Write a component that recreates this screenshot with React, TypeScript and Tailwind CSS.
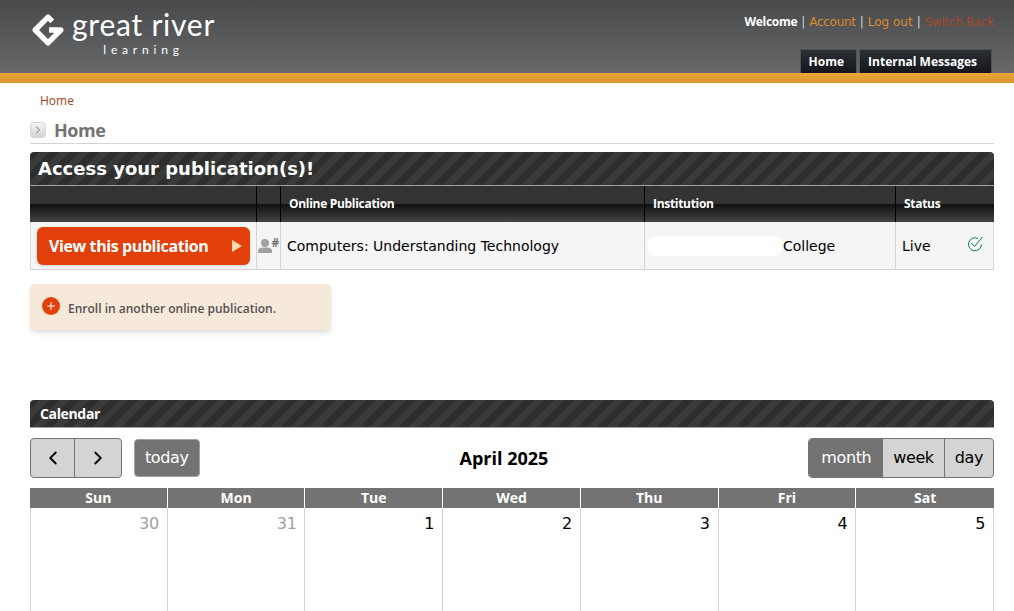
import React from 'react'
import { ChevronLeft, ChevronRight, Plus } from 'lucide-react'

const stripes = 'bg-[repeating-linear-gradient(135deg,#2e2e2e_0px,#2e2e2e_7px,#3a3a3a_7px,#3a3a3a_14px)]'
const days = ['Sun', 'Mon', 'Tue', 'Wed', 'Thu', 'Fri', 'Sat']
const cols = 'grid grid-cols-[227px_24px_364px_251px_98px]'
const bold = "font-['Open_Sans',sans-serif] font-bold"

const Logo = () => (
    <div className="flex items-start gap-2">
        <svg viewBox="0 0 30 30" className="mt-1.5 h-8 w-8" fill="none" stroke="#fff" strokeWidth="5" strokeLinejoin="round">
            <path d="M19 7 L15 3 L3 15 L15 27 L27 15 L16 15" />
        </svg>
        <div className="flex flex-col items-center gap-1 text-white">
            <span className="font-['Lato',sans-serif] text-3xl leading-8 tracking-wide">great river</span>
            <span className="font-['Lato',sans-serif] text-xs leading-3 tracking-[0.4em]">learning</span>
        </div>
    </div>
)

const Header = () => (
    <header>
        <div className="flex h-[73px] justify-between bg-gradient-to-b from-[#48494b] to-[#68696b] pl-8 pr-5">
            <div className="pt-2">
                <Logo />
            </div>
            <div className="flex flex-col items-end">
                <div className="flex gap-1 pt-3.5 text-xs text-neutral-300">
                    <span className={`${bold} tracking-tight text-white`}>Welcome</span>
                    <span>|</span>
                    <a className="tracking-tight text-[#d98a2e]">Account</a>
                    <span>|</span>
                    <a className="text-[#d98a2e]">Log out</a>
                    <span>|</span>
                    <a className="tracking-tight text-[#a8492a]">Switch Back</a>
                </div>
                <nav className={`mr-0.5 mt-auto flex gap-0.5 text-xs text-white ${bold}`}>
                    <a className="flex h-6 items-center border-x border-t border-neutral-600 bg-gradient-to-b from-[#2c2f36] to-[#14161c] pl-2 pr-3">Home</a>
                    <a className="flex h-6 items-center border-x border-t border-neutral-600 bg-gradient-to-b from-[#2c2f36] to-[#14161c] pl-2 pr-3.5">Internal Messages</a>
                </nav>
            </div>
        </div>
        <div className="h-2.5 bg-gradient-to-b from-[#eba63c] to-[#d9942f]" />
    </header>
)

const HeadCell = ({ children }: { children?: React.ReactNode }) => (
    <div className={`flex h-9 items-center border-r border-black bg-gradient-to-b from-[#333333] from-50% via-[#111111] via-50% to-[#444444] px-2 text-xs tracking-tight text-white last:border-r-0 ${bold}`}>
        {children}
    </div>
)

const Publications = () => (
    <section className="mt-2">
        <div className={`flex h-[34px] items-center rounded-t border-b border-neutral-400 px-2 text-lg font-bold text-white ${stripes}`}>
            Access your publication(s)!
        </div>
        <div className={cols}>
            <HeadCell />
            <HeadCell />
            <HeadCell>Online Publication</HeadCell>
            <HeadCell>Institution</HeadCell>
            <HeadCell>Status</HeadCell>
        </div>
        <div className={`${cols} h-12 border-b border-neutral-300 bg-neutral-100 text-sm text-black`}>
            <div className="flex items-center border-x border-neutral-300 pl-1.5">
                <a className={`flex h-9.5 w-[213px] items-center justify-between rounded-md bg-[#e2400b] pl-3 pr-2 text-base tracking-tight text-white shadow ${bold}`}>
                    View this publication
                    <span className="h-0 w-0 border-y-[6px] border-l-10 border-y-transparent border-l-orange-200" />
                </a>
            </div>
            <div className="flex items-center justify-center border-r border-neutral-300 text-neutral-400">
                <svg viewBox="0 0 14 14" className="h-3.5 w-3.5" fill="currentColor">
                    <circle cx="7" cy="4" r="4" />
                    <path d="M0 14 V12 Q0 8.5 5 8.5 H9 Q14 8.5 14 12 V14 Z" />
                </svg>
                <span className={`mb-1.5 text-xs leading-none text-neutral-500 ${bold}`}>#</span>
            </div>
            <div className="flex items-center border-r border-neutral-300 px-1.5">Computers: Understanding Technology</div>
            <div className="flex items-center border-r border-neutral-300">
                <span className="ml-0.5 h-5 w-34 rounded-full bg-white" />
                College
            </div>
            <div className="flex items-center justify-between border-r border-neutral-300 pl-1.5 pr-2.5">
                Live
                <svg viewBox="0 0 16 16" className="mb-1 h-4 w-4 text-emerald-700" fill="none" stroke="currentColor" strokeWidth="1">
                    <path d="M14.5 8.5a6.5 6.5 0 1 1-3.5-6" />
                    <path d="M4.5 7l3 3.5L15.5 1" />
                </svg>
            </div>
        </div>
    </section>
)

const Enroll = () => (
    <div className="mt-3.5 flex h-11.5 w-[301px] items-center gap-2 rounded-sm bg-[#f7e9da] px-3 font-['Open_Sans',sans-serif] text-xs font-semibold text-neutral-600 shadow-md">
        <span className="mb-0.5 flex h-4.5 w-4.5 items-center justify-center rounded-full bg-[#e2400b] text-white">
            <Plus size={12} strokeWidth={2} />
        </span>
        <span className="mt-1">Enroll in another online publication.</span>
    </div>
)

const Calendar = () => (
    <section className="mt-17.5">
        <div className={`flex h-7 items-center rounded-t border-b border-neutral-400 px-2.5 text-sm tracking-tight text-white ${bold} ${stripes}`}>
            Calendar
        </div>
        <div className="mt-2.5 flex items-center justify-between">
            <div className="flex items-center gap-3">
                <div className="flex h-10 rounded border border-neutral-500 bg-neutral-300 text-black">
                    <button className="flex w-11 items-center justify-center border-r border-neutral-500"><ChevronLeft size={22} /></button>
                    <button className="flex w-11.5 items-center justify-center"><ChevronRight size={22} /></button>
                </div>
                <button className="h-9.5 rounded border border-neutral-400 bg-neutral-500 px-2.5 text-base tracking-tight text-white">today</button>
            </div>
            <h2 className={`text-lg text-black ${bold}`}>April 2025</h2>
            <div className="flex h-10 rounded border border-neutral-500 bg-neutral-300 text-base tracking-tight text-black">
                <button className="rounded-l-sm bg-neutral-500 px-3 text-white">month</button>
                <button className="border-r border-neutral-500 px-2.5">week</button>
                <button className="px-2.5">day</button>
            </div>
        </div>
        <div className={`mt-2.5 grid grid-cols-7 bg-neutral-500 text-sm text-white ${bold}`}>
            {days.map((d) => (
                <div key={d} className="border-r border-white text-center last:border-r-0">{d}</div>
            ))}
        </div>
        <div className="grid grid-cols-7">
            {[30, 31, 1, 2, 3, 4, 5].map((n, i) => (
                <div key={n} className={`h-32 border-r border-neutral-300 px-2 py-1 text-right text-base tracking-tight first:border-l ${i < 2 ? 'text-neutral-400' : 'text-black'}`}>{n}</div>
            ))}
        </div>
    </section>
)

const App = () => {
    return (
        <div className="h-screen overflow-hidden bg-white font-['DejaVu_Sans',sans-serif]">
            <Header />
            <main className="pl-[30px] pr-5">
                <div className="pl-2.5 pt-2.5 font-['Open_Sans',sans-serif] text-xs text-[#a8431c]">Home</div>
                <div className={`mt-2 flex items-center gap-2 border-b border-neutral-300 py-px text-lg leading-6 tracking-tight text-neutral-500 ${bold}`}>
                    <span className="flex h-4 w-4 items-center justify-center rounded-sm border border-neutral-300 bg-gradient-to-b from-neutral-100 to-neutral-300 text-neutral-500">
                        <ChevronRight size={12} />
                    </span>
                    Home
                </div>
                <Publications />
                <Enroll />
                <Calendar />
            </main>
        </div>
    )
}

export default App
